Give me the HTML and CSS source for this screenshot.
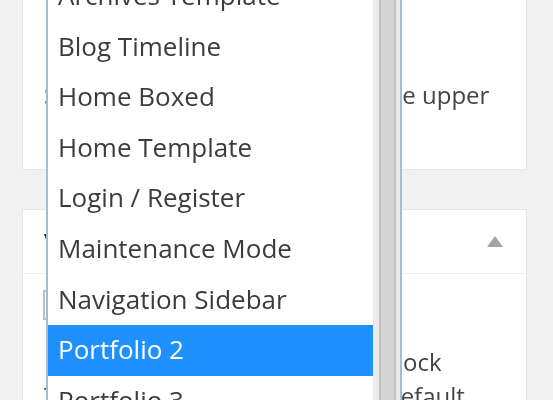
FILE: index.html
```html
<!doctype html>
<html lang="en">

<head>
	<meta charset="utf-8">
	<title>Page Attributes</title>
	<meta name="viewport" content="width=device-width, initial-scale=1"/>
	<link rel="stylesheet" href="styles.css">
</head>

<body>
	<div class="screen">
		<div class="postbox first">
			<div class="inside">
				<div class="ln"><span>Some templates change the layout in</span><span>the upper</span></div>
				<div class="ln"><span>right corner of the page.</span></div>
			</div>
		</div>

		<div class="postbox">
			<div class="hndle">
				<h2>Visibility</h2>
				<span class="toggle"></span>
			</div>
			<div class="inside options-box">
				<label class="check"><span class="box"></span>Hide page title</label>
				<div class="ln alt"><span>Lets you hide the title bar, or</span><span>to block</span></div>
				<div class="ln alt"><span>Title bar is shown</span><span>by default</span></div>
			</div>
		</div>

		<div class="dropdown">
			<ul class="options">
				<li>Archives Template</li>
				<li>Blog Timeline</li>
				<li>Home Boxed</li>
				<li>Home Template</li>
				<li>Login / Register</li>
				<li>Maintenance Mode</li>
				<li>Navigation Sidebar</li>
				<li class="selected">Portfolio 2</li>
				<li>Portfolio 3</li>
				<li>Portfolio 4</li>
			</ul>
			<div class="scrollbar"><div class="thumb"></div></div>
		</div>
	</div>
</body></html>
```

FILE: styles.css
```css
body {
	margin: 0;
	background-color: #f1f1f1;
	font-family: "Open Sans", "DejaVu Sans", sans-serif;
	color: #444;
}

.screen {
	position: relative;
	height: 400px;
	overflow: hidden;
	padding: 0 26px 0 22px;
	filter: blur(0.4px);
}

.postbox {
	background-color: #fff;
	border: 1px solid #e5e5e5;
}

.postbox.first {
	border-top: 0;
	height: 170px;
	box-sizing: border-box;
}

.postbox + .postbox {
	margin-top: 39px;
}

.inside {
	padding: 78px 37px 0 21px;
	font-size: 24px;
	line-height: 33.5px;
}

.inside.options-box {
	padding-top: 16px;
}

.ln {
	display: grid;
	grid-template-columns: 335px auto;
	white-space: nowrap;
}

.ln.alt {
	grid-template-columns: 309px auto;
}

.ln > span {
	overflow: hidden;
}

.hndle {
	display: flex;
	align-items: center;
	justify-content: space-between;
	height: 63px;
	padding: 0 23px 0 21px;
	border-bottom: 1px solid #eee;
}

.hndle h2 {
	margin: 0;
	font-size: 26px;
	font-weight: 600;
	color: #23282d;
}

.toggle {
	width: 0;
	height: 0;
	border-left: 8px solid transparent;
	border-right: 8px solid transparent;
	border-bottom: 11px solid #a0a5aa;
}

.check {
	display: flex;
	align-items: center;
	gap: 12px;
	height: 30px;
	margin: 0 0 25px -1px;
}

.box {
	width: 30px;
	height: 30px;
	box-sizing: border-box;
	border: 2px solid #bcc0c4;
	background-color: #fff;
}

/* open select list, drawn over the boxes */
.dropdown {
	position: absolute;
	left: 46px;
	top: -31px;
	bottom: -60px;
	width: 356px;
	box-sizing: border-box;
	display: flex;
	border: 2px solid #a7bbd3;
	background-color: #fff;
}

.options {
	flex: 1;
	margin: 0;
	padding: 0;
	list-style: none;
	font-size: 26px;
	color: #3c3c3c;
}

.options li {
	height: 50.6px;
	line-height: 49px;
	padding-left: 10px;
	white-space: nowrap;
}

.options li.selected {
	background-color: #1e90ff;
	color: #fff;
}

.scrollbar {
	width: 27px;
	background-color: #ebebeb;
	padding: 0 4px 0 6px;
	box-sizing: border-box;
}

.thumb {
	height: 100%;
	background-color: #d5d5d5;
	border-left: 2px solid #c2c2c2;
	border-right: 2px solid #c2c2c2;
	box-sizing: border-box;
}
```
